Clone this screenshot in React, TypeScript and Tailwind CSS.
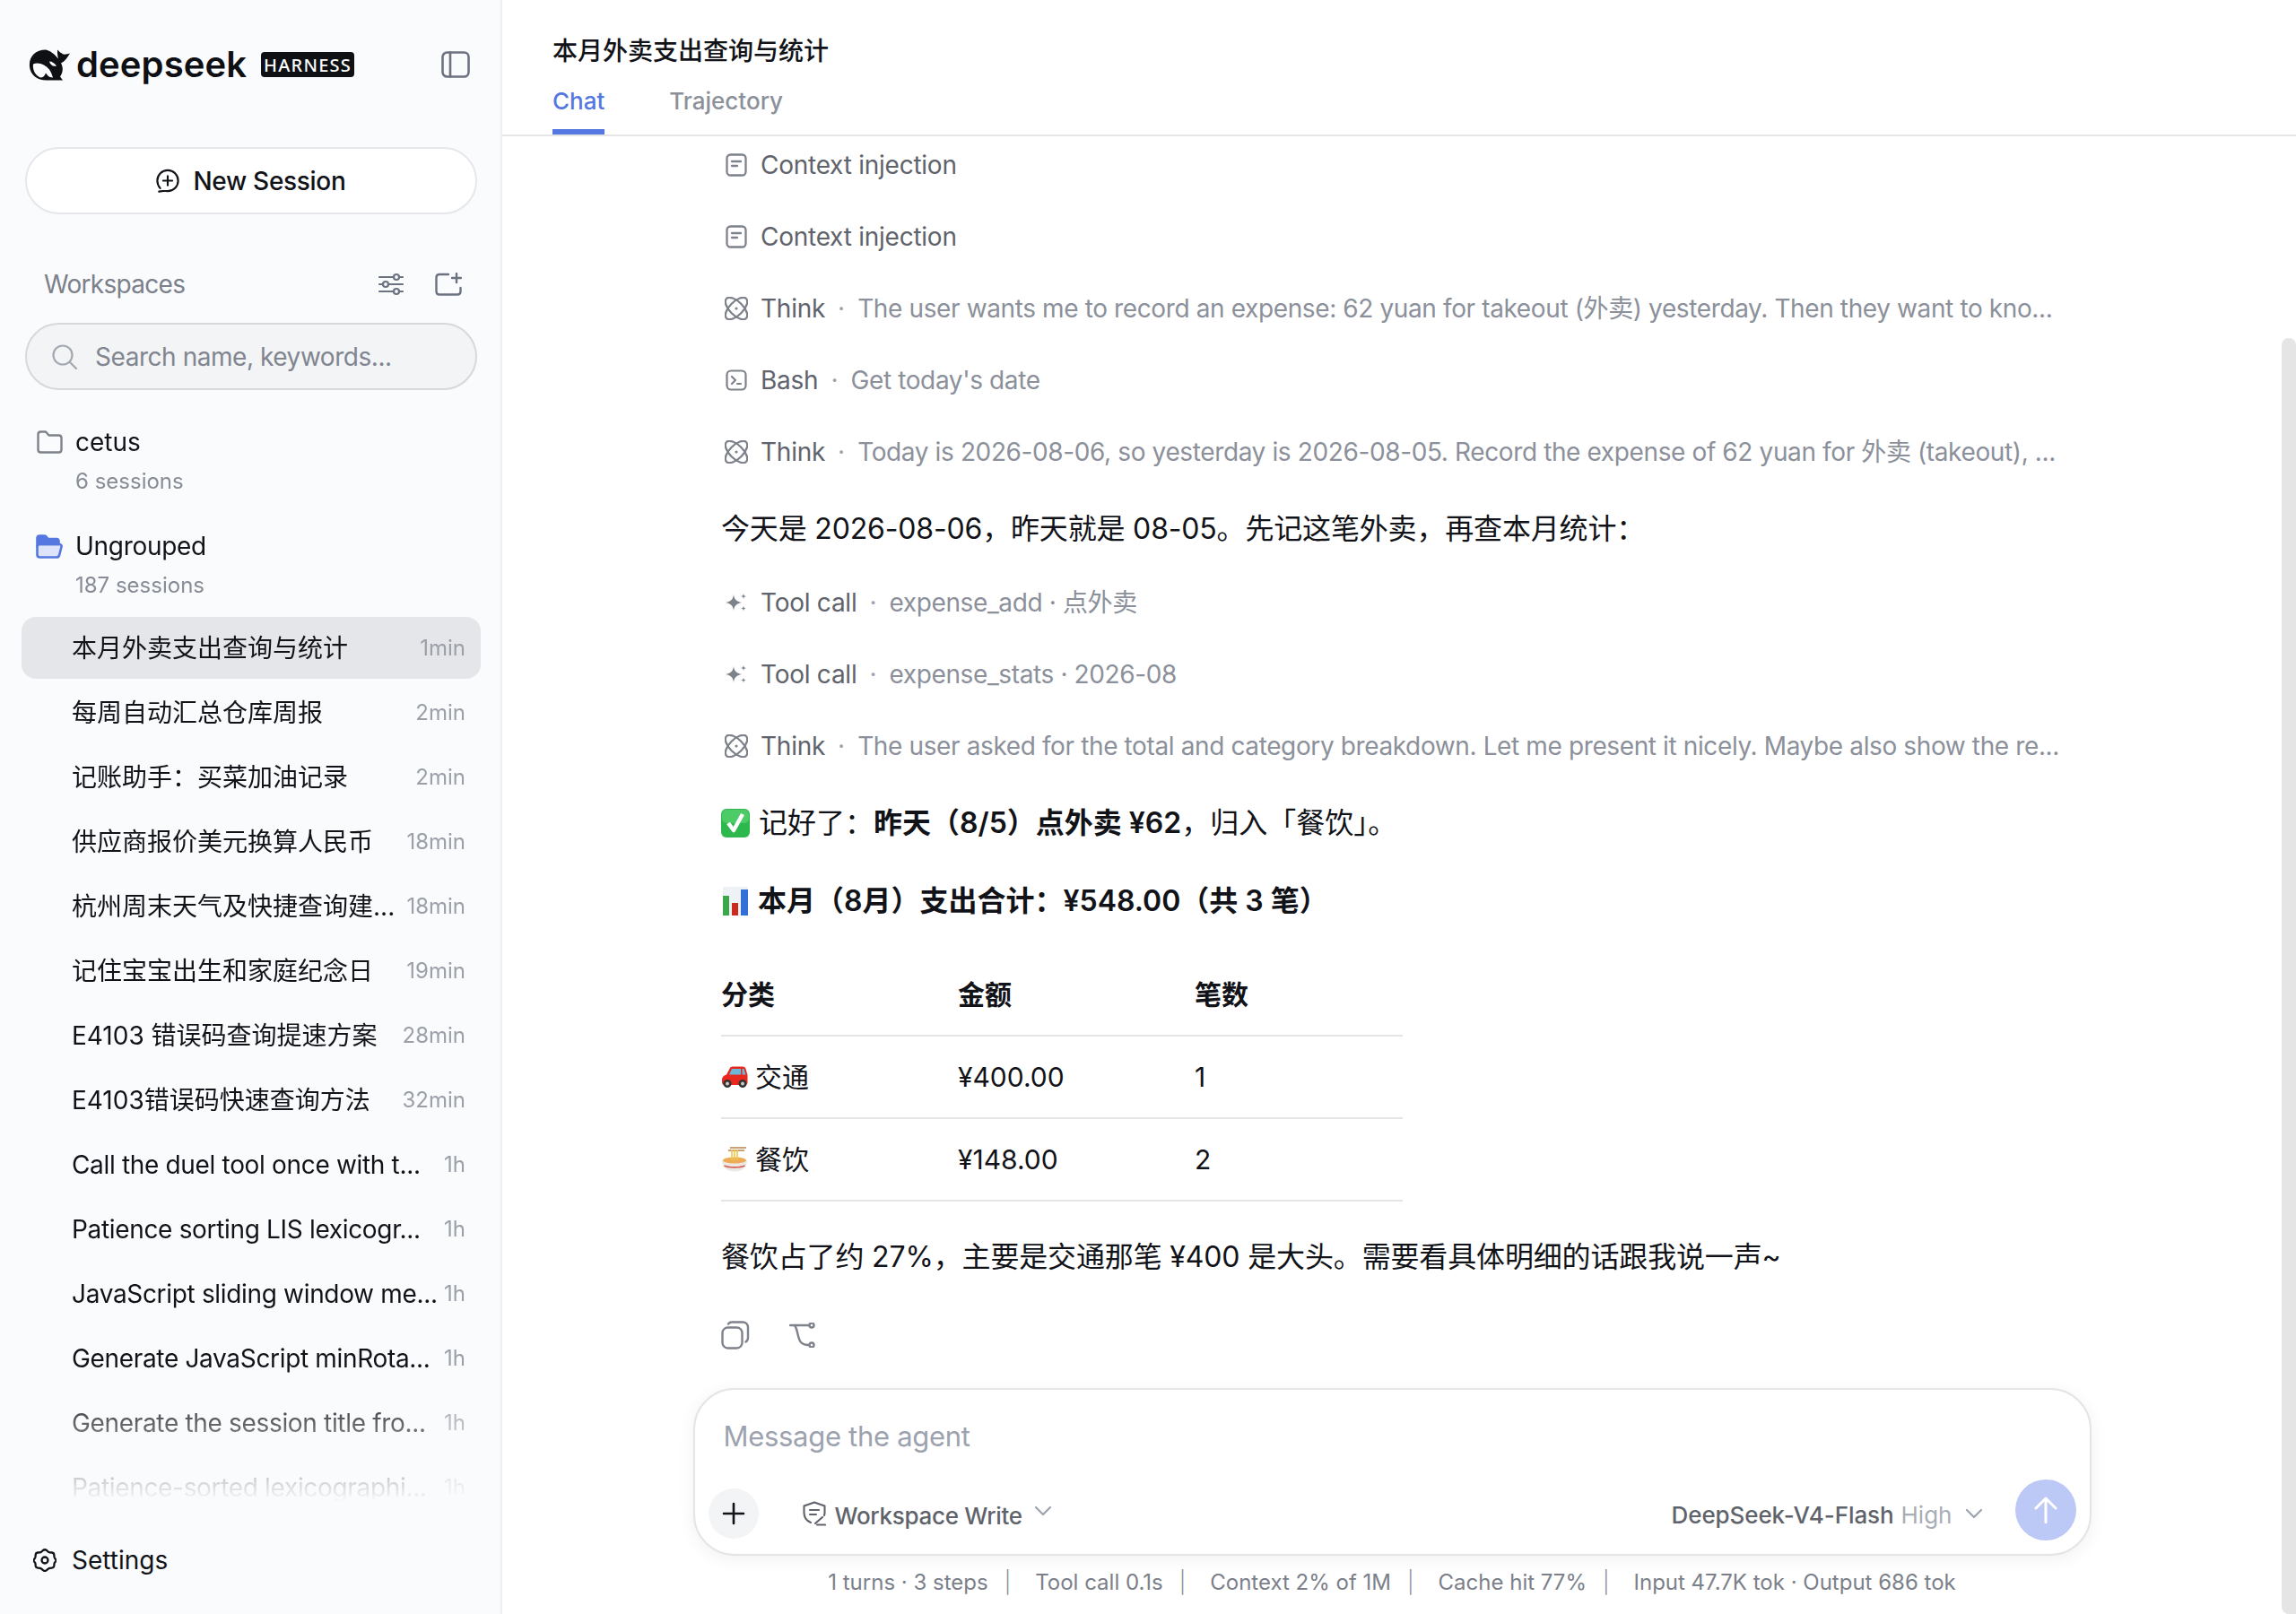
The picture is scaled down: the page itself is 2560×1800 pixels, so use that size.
import React from "react";

const Stroke = ({ w, h, children, className = "", sw = 2.4 }: { w: number; h: number; children: React.ReactNode; className?: string; sw?: number }) => (
  <svg width={w} height={h} viewBox={`0 0 ${w} ${h}`} fill="none" stroke="currentColor" strokeWidth={sw} strokeLinecap="round" strokeLinejoin="round" className={`shrink-0 ${className}`}>
    {children}
  </svg>
);

const Whale = () => (
  <svg width="46" height="35" viewBox="6 6.500 46 35" className="shrink-0">
    <path fill="#0e1014" d="M25 7C13 7 6 15 7 26C8 36 17 42 28 41L44 41L41 37C44 33 45 27 42 22C46 20 49 16 52 11C48 12 45 13 43 11C41 10 40 9 38 7C38 11 38 14 39 17C34 11 30 8 25 7Z" />
    <path fill="#fafbfd" d="M11 23C17 20 25 24 29 29C31 32 32 35 33 38C28 38 27 35 25 33C24 36 22 38 19 38C14 36 10 30 11 23Z" />
    <path fill="#fafbfd" d="M29 20C32 20 35 22 37 25C33 26 30 24 29 20Z" />
  </svg>
);

const NewIcon = () => (
  <svg width="26" height="28" viewBox="0 0 28 30" fill="none" stroke="currentColor" strokeWidth="2.300" strokeLinecap="round" strokeLinejoin="round" className="shrink-0">
    <path d="M5 23.500C3 21.300 1.500 18 1.500 14.500C1.500 7.600 7.100 2 14 2S26.500 7.600 26.500 14.500S20.900 27 14 27C11.500 27 9 26.500 7 27L3.500 27.500" />
    <path d="M14 9V20M8.500 14.500H19.500" />
  </svg>
);
const FilterIcon = () => (
  <Stroke w={28} h={28} sw={2.2}>
    <path d="M1 6H17M23 6H27M1 14H5M11 14H27M1 22H17M23 22H27" />
    <circle cx="20" cy="6" r="3" />
    <circle cx="8" cy="14" r="3" />
    <circle cx="20" cy="22" r="3" />
  </Stroke>
);
const AddFolderIcon = () => (
  <Stroke w={30} h={26} sw={2.4}>
    <path d="M15 2H5C3 2 1.500 3.500 1.500 5.500V21C1.500 23 3 24.500 5 24.500H25C27 24.500 28.500 23 28.500 21V17" />
    <path d="M24 1V11M19 6H29" />
  </Stroke>
);
const SearchIcon = () => (
  <Stroke w={28} h={28} sw={2.2}>
    <circle cx="12" cy="12" r="10.500" />
    <path d="M20 20L27 27" />
  </Stroke>
);
const FolderIcon = () => (
  <Stroke w={29} h={26} sw={2.4}>
    <path d="M1.500 4.500C1.500 2.800 2.800 1.500 4.500 1.500H10L13.500 5.500H24.500C26.200 5.500 27.500 6.800 27.500 8.500V21.500C27.500 23.200 26.200 24.500 24.500 24.500H4.500C2.800 24.500 1.500 23.200 1.500 21.500Z" />
  </Stroke>
);
const FolderOpenIcon = () => (
  <svg width="30" height="27" viewBox="0 0 30 27" fill="none" stroke="#5577e0" strokeWidth="2.600" strokeLinejoin="round" className="shrink-0">
    <path fill="#dde3f8" d="M4 11H26.500C28 11 29 12.500 28.500 14L26 23.500C25.600 24.800 24.500 25.500 23 25.500H4.500C2.800 25.500 1.500 24.200 1.500 22.500V13.500C1.500 12 2.500 11 4 11Z" />
    <path fill="#5577e0" d="M1.500 13V4C1.500 2.500 2.500 1.500 4 1.500H9.500C10.500 1.500 11 2 11.500 2.500L13.500 5H23C24.700 5 25.500 6 25.500 7.500V11H4C2.500 11 1.500 12 1.500 13Z" />
  </svg>
);
const SettingsIcon = () => (
  <Stroke w={26} h={26} sw={2.3}>
    <path d="M11 2C12 1.200 14 1.200 15 2L16.800 3.700C17.300 4.100 18 4.400 18.600 4.400L21 4.500C22.300 4.700 23.200 5.700 23.300 7L23.500 9.200C23.600 10 23.900 10.600 24.300 11.100L25 12C25.600 12.800 25.600 13.700 25 14.500L24.300 15.200C23.800 15.700 23.500 16.400 23.500 17L23.300 19.200C23.100 20.600 22.200 21.500 20.900 21.600L18.600 21.800C18 21.900 17.300 22.200 16.800 22.600L15 24.200C14 25 12 25 11 24.200L9.200 22.600C8.700 22.200 8 21.900 7.400 21.800L5.100 21.600C3.800 21.500 2.900 20.600 2.700 19.200L2.500 17C2.500 16.400 2.200 15.700 1.700 15.200L1 14.500C0.400 13.700 0.400 12.800 1 12L1.700 11.100C2.100 10.600 2.400 10 2.500 9.200L2.700 7C2.800 5.700 3.700 4.700 5 4.500L7.400 4.400C8 4.400 8.700 4.100 9.200 3.700Z" />
    <circle cx="13" cy="13" r="3.500" />
  </Stroke>
);
const DocIcon = () => (
  <Stroke w={24} h={26} sw={2.3}>
    <rect x="1.500" y="1.500" width="21" height="23" rx="4" />
    <path d="M7 9H17M7 14H13" />
  </Stroke>
);
const ThinkIcon = () => (
  <svg width="26" height="26" viewBox="0 0 26 26" fill="none" stroke="currentColor" strokeWidth="2.300" className="shrink-0">
    <ellipse cx="13" cy="13" rx="15.500" ry="7.500" transform="rotate(45 13 13)" />
    <ellipse cx="13" cy="13" rx="15.500" ry="7.500" transform="rotate(-45 13 13)" />
    <circle cx="13" cy="13" r="1.600" fill="currentColor" stroke="none" />
  </svg>
);
const BashIcon = () => (
  <Stroke w={24} h={24} sw={2.2}>
    <rect x="1.500" y="1.500" width="21" height="21" rx="4.500" />
    <path d="M7 8L11 12L7 16M13 16H17" />
  </Stroke>
);
const SparkIcon = () => (
  <svg width="24" height="20" viewBox="0 0 24 20" fill="currentColor" className="shrink-0">
    <path d="M9 1C9.800 6.500 11.800 8.800 18 10C11.800 11.200 9.800 13.500 9 19C8.200 13.500 6.200 11.200 0 10C6.200 8.800 8.200 6.500 9 1Z" />
    <path d="M20 0C20.300 2 21 2.700 23.500 3C21 3.300 20.300 4 20 6C19.700 4 19 3.300 16.500 3C19 2.700 19.700 2 20 0Z" />
    <path d="M20 14C20.300 15.600 21 16.300 23 16.500C21 16.700 20.300 17.400 20 19.500C19.700 17.400 19 16.700 17 16.500C19 16.300 19.700 15.600 20 14Z" />
  </svg>
);
const CopyIcon = () => (
  <Stroke w={32} h={32} sw={2.4}>
    <rect x="1.500" y="7.500" width="22" height="23" rx="6" />
    <path d="M8 3.500C9 2.200 10.500 1.500 12 1.500H24C27.500 1.500 30 4 30 7.500V19C30 21 29 22.500 27.500 23.500" />
  </Stroke>
);
const BranchIcon = () => (
  <Stroke w={30} h={28} sw={2.4}>
    <path d="M1 3H22" />
    <path d="M6 3C10 9 9 17 13 22C15 24 18 25 21 25" />
    <circle cx="25" cy="3" r="2.500" />
    <circle cx="25" cy="25" r="2.500" />
  </Stroke>
);
const ShieldIcon = () => (
  <Stroke w={26} h={28} sw={2.1}>
    <path d="M9 24C4 22 1.500 18 1.500 13V5.500L13 1.500L24.500 5.500V13C24.500 14 24.400 15 24 16" />
    <path d="M8 10H18M8 15H15" />
    <path d="M14 25L22 18M16 26.500H25" />
  </Stroke>
);
const Chevron = ({ w = 20 }: { w?: number }) => (
  <Stroke w={w} h={12} sw={2.2}>
    <path d={`M2 2L${w / 2} 10L${w - 2} 2`} />
  </Stroke>
);
const CheckEmoji = () => (
  <svg width="32" height="32" viewBox="0 0 32 32" className="shrink-0">
    <rect width="32" height="32" rx="6" fill="#2db84d" />
    <rect x="1" y="1" width="30" height="15" rx="5" fill="#4ccb66" />
    <path d="M8 16L14 24L24 6" fill="none" stroke="#fff" strokeWidth="4.500" strokeLinejoin="round" />
  </svg>
);
const ChartEmoji = () => (
  <svg width="28" height="32" viewBox="0 0 28 32" className="shrink-0">
    <rect width="28" height="32" fill="#eef2f6" />
    <rect y="10" width="7" height="22" fill="#38a848" />
    <rect x="10" y="18" width="7" height="14" fill="#cc2a1e" />
    <rect x="20" y="3" width="8" height="29" fill="#3270d8" />
  </svg>
);
const CarEmoji = () => (
  <svg width="30" height="24" viewBox="0 0 30 24" className="shrink-0">
    <path fill="#e8281e" d="M1 15C1 12 3 10.500 6 9.500L10 2C10.600 1 12 0.500 13 0.500H24C26 0.500 27 1.500 27.500 3L29.500 10V18C29.500 20 28.500 21 27 21H3C1.500 21 1 19 1 17Z" />
    <path fill="#6cb6d6" d="M12 3H22V9.500H9ZM23.500 3H25.500L27.500 9.500H23.500Z" />
    <circle cx="7" cy="19.500" r="4.500" fill="#333" />
    <circle cx="7" cy="19.500" r="2" fill="#ccc" />
    <circle cx="24" cy="19.500" r="4.500" fill="#333" />
    <circle cx="24" cy="19.500" r="2" fill="#ccc" />
  </svg>
);
const NoodleEmoji = () => (
  <svg width="30" height="28" viewBox="0 0 30 28" className="shrink-0">
    <rect x="10" y="0" width="18" height="2" fill="#c9a27a" />
    <rect x="8" y="3" width="18" height="2" fill="#c9a27a" />
    <path d="M1 15H29C29 22 24 27.500 15 27.500C6 27.500 1 22 1 15Z" fill="#ece9e5" />
    <ellipse cx="15" cy="15" rx="13" ry="3.500" fill="#eeab58" />
    <path d="M12 3V15M15 3V15M18 3V15" stroke="#f0c64a" strokeWidth="1.600" />
    <path d="M3.500 21C8 23.500 22 23.500 26.500 21" stroke="#d66050" strokeWidth="1.800" fill="none" />
  </svg>
);

const sessions: [string, string][] = [
  ["本月外卖支出查询与统计", "1min"],
  ["每周自动汇总仓库周报", "2min"],
  ["记账助手：买菜加油记录", "2min"],
  ["供应商报价美元换算人民币", "18min"],
  ["杭州周末天气及快捷查询建...", "18min"],
  ["记住宝宝出生和家庭纪念日", "19min"],
  ["E4103 错误码查询提速方案", "28min"],
  ["E4103错误码快速查询方法", "32min"],
  ["Call the duel tool once with t...", "1h"],
  ["Patience sorting LIS lexicogr...", "1h"],
  ["JavaScript sliding window me...", "1h"],
  ["Generate JavaScript minRota...", "1h"],
  ["Generate the session title fro...", "1h"],
  ["Patience-sorted lexicographi...", "1h"],
];

const Step = ({ icon, label, detail }: { icon: React.ReactNode; label: string; detail?: string }) => (
  <div className="flex h-[48px] items-center text-[28px] text-[#5f636b]">
    <span className="ml-[4px] flex w-[26px] shrink-0 items-center justify-center text-[#7d828b]">{icon}</span>
    <span className="ml-[14px] whitespace-nowrap tracking-[-0.25px]">{label}</span>
    {detail && (
      <>
        <span className="mx-[14px] text-[#9ca3af]">·</span>
        <span className="whitespace-nowrap tracking-[-0.38px] text-[#8b909a]">{detail}</span>
      </>
    )}
  </div>
);

const Sep = () => <span className="ml-[18px] mr-[27px] font-light text-[#8b909a]">|</span>;

export default function App() {
  return (
    <div className="flex h-screen w-full overflow-hidden bg-white font-[Inter,'Noto_Sans_CJK_SC',sans-serif] text-[#111318]">
      <aside className="flex w-[560px] shrink-0 flex-col border-r-2 border-[#eff0f2] bg-[#fafbfd]">
        <div className="ml-[32px] mr-[34px] mt-[48px] flex h-[48px] items-center">
          <Whale />
          <span className="ml-[7px] w-[190px] whitespace-nowrap text-[40px] font-semibold leading-none tracking-[0.1px] text-[#0e1014]">deepseek</span>
          <span className="ml-[16px] flex h-[28px] w-[104px] items-center justify-center rounded-[4px] bg-[#0e1014] pt-[1px] font-['Noto_Sans'] text-[20px] font-medium tracking-[1.2px] text-white">HARNESS</span>
          <span className="ml-auto text-[#6b7280]">
            <Stroke w={32} h={30} sw={2.6}>
              <rect x="1.500" y="1.500" width="29" height="27" rx="5" />
              <path d="M10 1.500V28.500" />
            </Stroke>
          </span>
        </div>

        <div className="ml-[28px] mr-[26px] mt-[68px] flex h-[75px] items-center justify-center gap-[15px] rounded-full border-2 border-[#e5e7eb] bg-white text-[28px] font-medium tracking-[-0.3px]">
          <NewIcon />
          New Session
        </div>

        <div className="ml-[28px] mr-[26px] mt-[62px] flex h-[32px] items-center pl-[21px] text-[28px] tracking-[-0.7px] text-[#7b808a]">
          Workspaces
          <span className="ml-auto text-[#6b7280]"><FilterIcon /></span>
          <span className="ml-[35px] mr-[17px] text-[#6b7280]"><AddFolderIcon /></span>
        </div>

        <div className="ml-[28px] mr-[26px] mt-[27px] flex h-[75px] items-center rounded-full border-2 border-[#d6d8dc] bg-[#f3f4f6] pl-[28px] text-[28px] tracking-[-0.45px] text-[#80858f]">
          <span className="text-[#a3a8b1]"><SearchIcon /></span>
          <span className="ml-[20px]">Search name, keywords...</span>
        </div>

        <div className="mt-[38px] flex min-h-0 flex-1 flex-col overflow-hidden [mask-image:linear-gradient(to_bottom,black_0,black_1068px,transparent_1202px)]">
          <div className="flex h-[40px] items-center pl-[41px] text-[28px]">
            <span className="text-[#7d828b]"><FolderIcon /></span>
            <span className="ml-[14px]">cetus</span>
          </div>
          <div className="mt-[8px] pl-[84px] text-[24px] leading-[32px] text-[#878c96]">6 sessions</div>

          <div className="mt-[36px] flex h-[40px] items-center pl-[40px] text-[28px]">
            <FolderOpenIcon />
            <span className="ml-[14px] tracking-[-0.3px]">Ungrouped</span>
          </div>
          <div className="mt-[8px] pl-[84px] text-[24px] leading-[32px] text-[#878c96]">187 sessions</div>

          <div className="ml-[24px] mr-[22px] mt-[19px] flex flex-col">
            {sessions.map(([t, d], i) => (
              <div key={t} className={`mb-[3px] flex h-[69px] shrink-0 items-center justify-between pl-[56px] pr-[17px] text-[28px] ${i === 0 ? "rounded-[16px] bg-[#e5e6e9]" : ""}`}>
                <span className={`whitespace-nowrap ${/^[\x00-\x7f]+$/.test(t) ? "tracking-[-0.33px]" : ""}`}>{t}</span>
                <span className="text-[24px] text-[#9a9fa8]">{d}</span>
              </div>
            ))}
          </div>
        </div>

        <div className="mb-[40px] flex h-[40px] items-center pl-[37px] text-[28px]">
          <SettingsIcon />
          <span className="ml-[17px]">Settings</span>
        </div>
      </aside>

      <main className="relative flex min-w-0 flex-1 flex-col">
        <header className="h-[152px] shrink-0 border-b-2 border-[#e5e5e5] pl-[56px]">
          <div className="pt-[37px] text-[28px] font-medium leading-[40px]">本月外卖支出查询与统计</div>
          <div className="mt-[16px] flex text-[26px] font-medium">
            <div className="flex h-[57px] items-start border-b-[6px] border-[#5577e0] text-[#5577e0]">Chat</div>
            <div className="ml-[72px] text-[#8b909a]">Trajectory</div>
          </div>
        </header>

        <div className="flex min-h-0 flex-1 flex-col overflow-hidden pl-[244px] pt-[8px]">
          <div className="flex flex-col gap-[32px]">
            <Step icon={<DocIcon />} label="Context injection" />
            <Step icon={<DocIcon />} label="Context injection" />
            <Step icon={<ThinkIcon />} label="Think" detail="The user wants me to record an expense: 62 yuan for takeout (外卖) yesterday. Then they want to kno..." />
            <Step icon={<BashIcon />} label="Bash" detail="Get today's date" />
            <Step icon={<ThinkIcon />} label="Think" detail="Today is 2026-08-06, so yesterday is 2026-08-05. Record the expense of 62 yuan for 外卖 (takeout), ..." />
          </div>

          <p className="mt-[38px] text-[32px] leading-[48px] tracking-[-0.17px]">今天是 2026-08-06，昨天就是 08-05。先记这笔外卖，再查本月统计：</p>

          <div className="mt-[34px] flex flex-col gap-[32px]">
            <Step icon={<SparkIcon />} label="Tool call" detail="expense_add · 点外卖" />
            <Step icon={<SparkIcon />} label="Tool call" detail="expense_stats · 2026-08" />
            <Step icon={<ThinkIcon />} label="Think" detail="The user asked for the total and category breakdown. Let me present it nicely. Maybe also show the re..." />
          </div>

          <p className="mt-[38px] flex h-[48px] items-center text-[32px]">
            <CheckEmoji />
            <span className="ml-[10px]">记好了：<b className="font-semibold">昨天（8/5）点外卖 ¥62</b>，归入「餐饮」。</span>
          </p>
          <p className="mt-[39px] flex h-[48px] items-center text-[32px] font-semibold">
            <span className="ml-[2px]"><ChartEmoji /></span>
            <span className="ml-[11px]">本月（8月）支出合计：¥548.00（共 3 笔）</span>
          </p>

          <table className="mt-[34px] w-[760px] table-fixed text-left text-[30px]">
            <colgroup>
              <col className="w-[264px]" />
              <col className="w-[264px]" />
              <col className="w-[232px]" />
            </colgroup>
            <tbody>
              <tr className="h-[92px] border-b-2 border-[#e5e5e5] font-semibold">
                <td className="pt-[2px]">分类</td>
                <td className="pt-[2px]">金额</td>
                <td className="pt-[2px]">笔数</td>
              </tr>
              <tr className="h-[92px] border-b-2 border-[#e5e5e5]">
                <td><span className="flex items-center gap-[8px]"><CarEmoji />交通</span></td>
                <td>¥400.00</td>
                <td>1</td>
              </tr>
              <tr className="h-[92px] border-b-2 border-[#e5e5e5]">
                <td><span className="flex items-center gap-[8px]"><NoodleEmoji />餐饮</span></td>
                <td>¥148.00</td>
                <td>2</td>
              </tr>
            </tbody>
          </table>

          <p className="mt-[38px] text-[32px] leading-[48px] tracking-[-0.15px]">餐饮占了约 27%，主要是交通那笔 ¥400 是大头。需要看具体明细的话跟我说一声~</p>

          <div className="mt-[47px] flex items-center text-[#7d828b]">
            <CopyIcon />
            <span className="ml-[44px]"><BranchIcon /></span>
          </div>
        </div>

        <div className="mr-[16px] flex shrink-0 flex-col items-center">
          <div className="flex h-[187px] w-[1559px] flex-col rounded-[46px] border-2 border-[#e5e5e5] bg-white pl-[15px] pr-[15px] shadow-[0_4px_20px_rgba(0,0,0,0.06)]">
            <div className="mt-[32px] h-[40px] pl-[17px] text-[31px] leading-[40px] tracking-[-0.3px] text-[#9ca3af]">Message the agent</div>
            <div className="mt-[28px] flex items-center">
              <span className="mt-[8px] flex h-[56px] w-[56px] items-center justify-center rounded-full bg-[#f3f4f6] text-[#111318]">
                <Stroke w={26} h={26} sw={2.6}><path d="M13 2V24M2 13H24" /></Stroke>
              </span>
              <span className="ml-[49px] mt-[8px] text-[#5f636b]"><ShieldIcon /></span>
              <span className="ml-[10px] mt-[12px] text-[26px] font-medium tracking-[-0.3px] text-[#5f636b]">Workspace Write</span>
              <span className="ml-[13px] mt-[2px] text-[#9ca3af]"><Chevron /></span>
              <span className="ml-auto mt-[11px] text-[26px] font-medium tracking-[-0.1px] text-[#5f636b]">DeepSeek-V4-Flash</span>
              <span className="ml-[8px] mt-[11px] text-[26px] text-[#a9adb5]">High</span>
              <span className="ml-[14px] mt-[8px] text-[#9ca3af]"><Chevron /></span>
              <span className="ml-[36px] flex h-[68px] w-[68px] items-center justify-center rounded-full bg-[#bcc8f5] text-white">
                <Stroke w={28} h={30} sw={3}><path d="M14 29V2M3 13L14 2L25 13" /></Stroke>
              </span>
            </div>
          </div>
          <div className="mb-[20px] mt-[15px] flex h-[30px] items-center text-[24px] text-[#7b808a]">
            <span>1 turns · 3 steps</span><Sep />
            <span>Tool call 0.1s</span><Sep />
            <span>Context 2% of 1M</span><Sep />
            <span>Cache hit 77%</span><Sep />
            <span>Input 47.7K tok · Output 686 tok</span>
          </div>
        </div>

        <div className="absolute bottom-0 right-0 top-[377px] w-[16px] rounded-l-[8px] rounded-tr-[8px] bg-[#e5e5e5]" />
      </main>
    </div>
  );
}
